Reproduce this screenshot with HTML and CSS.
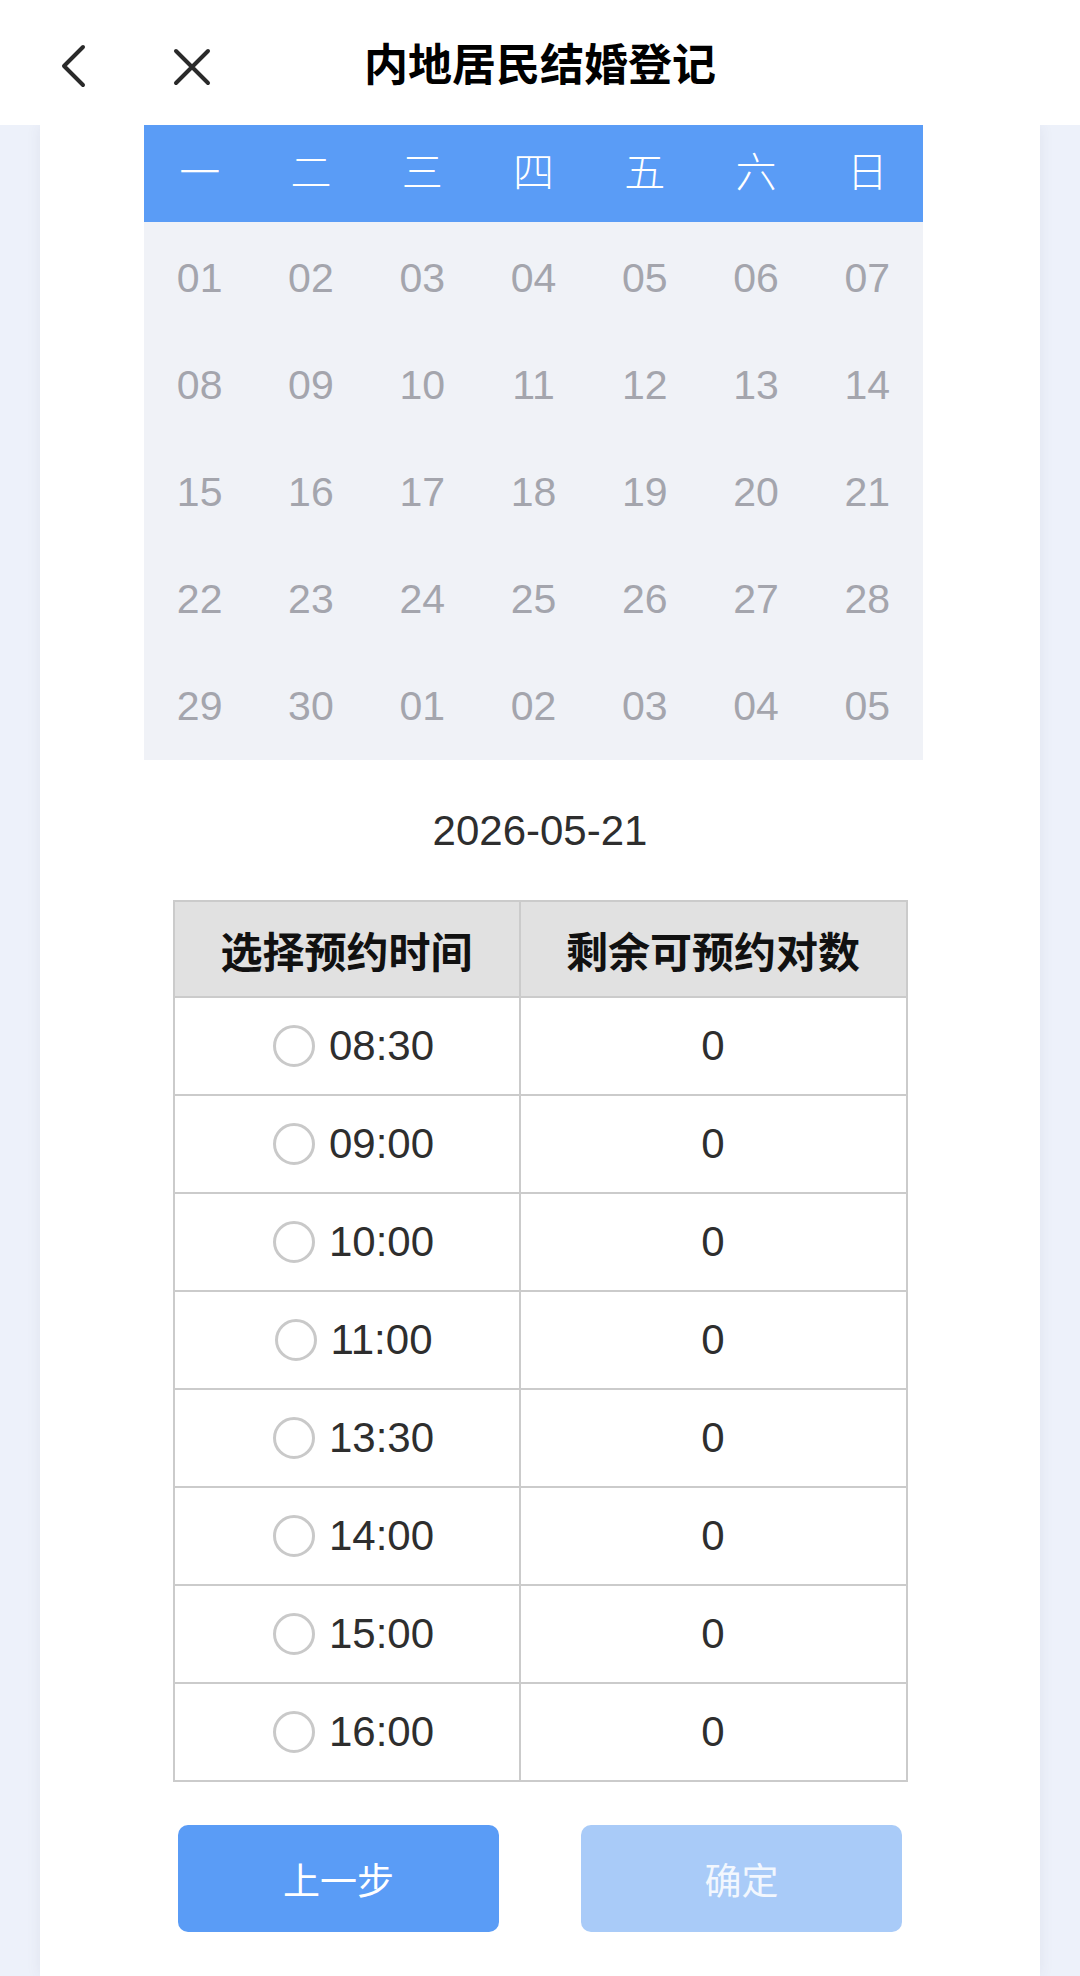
FILE: index.html
```html
<!DOCTYPE html>
<html lang="zh-CN">
<head>
<meta charset="utf-8">
<title>内地居民结婚登记</title>
<link rel="stylesheet" href="styles.css">
</head>
<body>
<header class="topbar">
  <div class="nav-icons">
    <svg class="icon back" width="30" height="44" viewBox="0 0 30 44"><polyline points="24,3 5,22 24,41" fill="none" stroke="#2a2a2a" stroke-width="4" stroke-linecap="round" stroke-linejoin="round"/></svg>
    <svg class="icon close" width="40" height="38" viewBox="0 0 40 38"><path d="M4 3 L36 35 M36 3 L4 35" fill="none" stroke="#2a2a2a" stroke-width="4" stroke-linecap="round"/></svg>
  </div>
  <h1 class="title">内地居民结婚登记</h1>
</header>
<main class="card">
  <section class="calendar">
    <div class="cal-head">
      <span>一</span><span>二</span><span>三</span><span>四</span><span>五</span><span>六</span><span>日</span>
    </div>
    <div class="cal-body">
      <span>01</span><span>02</span><span>03</span><span>04</span><span>05</span><span>06</span><span>07</span>
      <span>08</span><span>09</span><span>10</span><span>11</span><span>12</span><span>13</span><span>14</span>
      <span>15</span><span>16</span><span>17</span><span>18</span><span>19</span><span>20</span><span>21</span>
      <span>22</span><span>23</span><span>24</span><span>25</span><span>26</span><span>27</span><span>28</span>
      <span>29</span><span>30</span><span>01</span><span>02</span><span>03</span><span>04</span><span>05</span>
    </div>
  </section>
  <div class="date">2026-05-21</div>
  <div class="slots">
    <div class="row head"><div class="cell c1">选择预约时间</div><div class="cell c2">剩余可预约对数</div></div>
    <div class="row"><div class="cell c1"><span class="radio"></span>08:30</div><div class="cell c2">0</div></div>
    <div class="row"><div class="cell c1"><span class="radio"></span>09:00</div><div class="cell c2">0</div></div>
    <div class="row"><div class="cell c1"><span class="radio"></span>10:00</div><div class="cell c2">0</div></div>
    <div class="row"><div class="cell c1"><span class="radio"></span>11:00</div><div class="cell c2">0</div></div>
    <div class="row"><div class="cell c1"><span class="radio"></span>13:30</div><div class="cell c2">0</div></div>
    <div class="row"><div class="cell c1"><span class="radio"></span>14:00</div><div class="cell c2">0</div></div>
    <div class="row"><div class="cell c1"><span class="radio"></span>15:00</div><div class="cell c2">0</div></div>
    <div class="row"><div class="cell c1"><span class="radio"></span>16:00</div><div class="cell c2">0</div></div>
  </div>
  <div class="actions">
    <button class="btn prev">上一步</button>
    <button class="btn ok">确定</button>
  </div>
</main>
</body>
</html>
```
FILE: styles.css
```css
* { box-sizing: border-box; }
html, body { margin: 0; padding: 0; }
body {
  width: 1080px;
  height: 1976px;
  overflow: hidden;
  background: #edf1fa;
  font-family: "Liberation Sans", "Noto Sans CJK SC", sans-serif;
  color: #333;
}
.topbar {
  position: relative;
  height: 125px;
  background: #fff;
  display: flex;
  align-items: center;
  justify-content: center;
  z-index: 2;
}
.nav-icons {
  position: absolute;
  left: 59px;
  top: 44px;
  display: flex;
  align-items: center;
  gap: 83px;
}
.icon { display: block; }
.close { margin-top: 2px; }
.title {
  margin: 6px 0 0;
  font-size: 44px;
  font-weight: 700;
  color: #000;
  line-height: 1;
  letter-spacing: 0;
}
.card {
  margin: 0 40px;
  height: 1851px;
  background: #fff;
  box-shadow: 0 0 14px rgba(60, 70, 100, 0.08);
  position: relative;
  z-index: 1;
}
.calendar {
  margin-left: 104px;
  width: 779px;
}
.cal-head {
  height: 97px;
  padding-bottom: 10px;
  background: #5a9cf6;
  display: grid;
  grid-template-columns: repeat(7, 1fr);
  align-items: center;
  justify-items: center;
  color: #fff;
  font-size: 41px;
  font-weight: 300;
}
.cal-body {
  background: #f0f2f7;
  display: grid;
  grid-template-columns: repeat(7, 1fr);
  grid-auto-rows: 107px;
  align-items: center;
  justify-items: center;
  color: #a4a5ad;
  font-size: 41px;
  padding-top: 3px;
}
.date {
  margin-top: 50px;
  text-align: center;
  font-size: 42px;
  line-height: 42px;
  color: #2e2e2e;
}
.slots {
  margin: 48px auto 0;
  width: 735px;
  border-top: 2px solid #cbcbcb;
  border-left: 2px solid #cbcbcb;
}
.row {
  display: flex;
  height: 98px;
}
.row.head { height: 96px; }
.cell {
  display: flex;
  align-items: center;
  justify-content: center;
  border-right: 2px solid #cbcbcb;
  border-bottom: 2px solid #cbcbcb;
  font-size: 42px;
  color: #2e2e2e;
}
.c1 { width: 346px; padding-left: 14px; }
.c2 { flex: 1; }
.head .cell {
  background: #e1e1e1;
  font-weight: 700;
  color: #111;
  padding-left: 0;
}
.radio {
  width: 42px;
  height: 42px;
  border: 3px solid #c9c9c9;
  border-radius: 50%;
  margin-right: 14px;
  flex: none;
}
.actions {
  display: flex;
  justify-content: space-between;
  width: 724px;
  margin: 43px auto 0;
}
.btn {
  width: 321px;
  height: 107px;
  border: 0;
  border-radius: 10px;
  color: #fff;
  font-family: "Liberation Sans", "Noto Sans CJK SC", sans-serif;
  font-size: 37px;
  padding: 0;
}
.prev { background: #5a9cf6; }
.ok { background: #a9cbf8; color: #f2f7fe; }
```
